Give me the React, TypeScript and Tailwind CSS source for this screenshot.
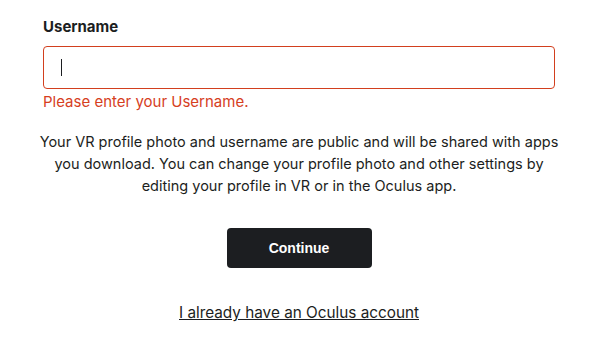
import React from "react";

export default function App() {
  return (
    <div className="w-[595px] h-[346px] bg-white font-['Inter',sans-serif] text-[#1c1e21]">
      <div className="pl-[43px] pr-[40px] pt-[17px]">
        <div className="text-[15px] font-bold leading-[20px] text-[#1c1e21]">Username</div>
        <div className="mt-[9px] h-[43px] w-[512px] rounded-[4px] border border-[#d23f1e] flex items-center pl-[17px]">
          <div className="w-px h-[17px] bg-[#1c1e21]" />
        </div>
        <div className="mt-[3px] text-[15px] leading-[20px] text-[#d6401e]">Please enter your Username.</div>
        <p className="mt-[19px] ml-[-12px] w-[536px] text-center text-[14.5px] leading-[22px] text-[#1c1e21]">
          Your VR profile photo and username are public and will be shared with apps you download. You can change your profile photo and other settings by editing your profile in VR or in the Oculus app.
        </p>
        <div className="mt-[31px] w-[512px] flex justify-center">
          <button className="w-[145px] h-[40px] rounded-[4px] bg-[#1c1e21] text-white text-[14px] font-bold font-['Liberation_Sans',sans-serif]">
            Continue
          </button>
        </div>
        <div className="mt-[35px] w-[512px] flex justify-center">
          <a className="text-[15.3px] leading-[20px] underline text-[#1c1e21]">I already have an Oculus account</a>
        </div>
      </div>
    </div>
  );
}
